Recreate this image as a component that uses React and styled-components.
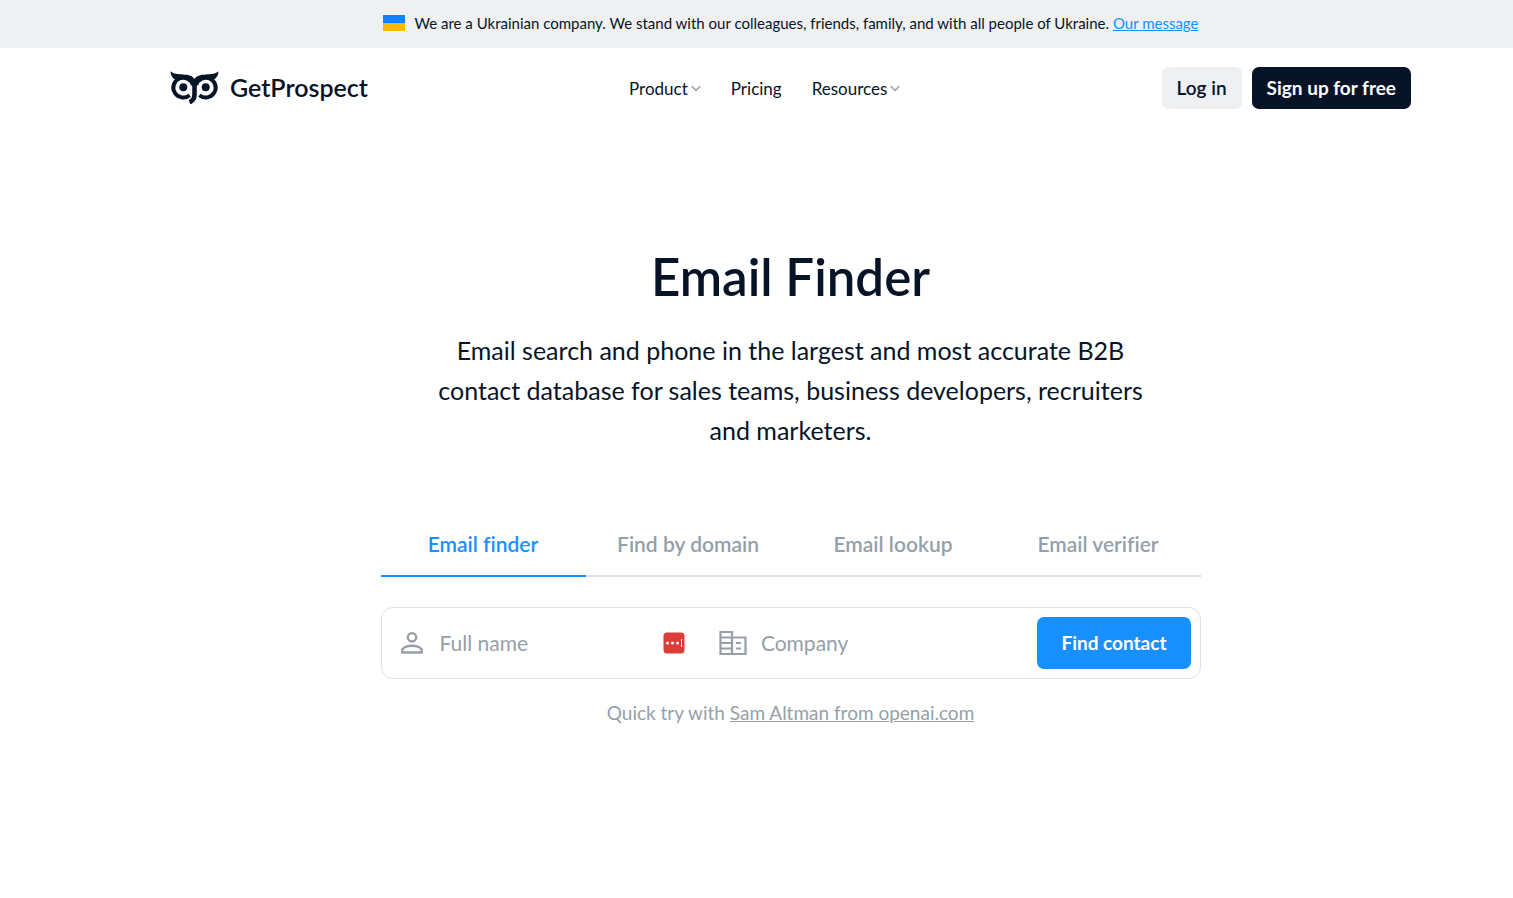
import React from 'react';
import styled, { createGlobalStyle } from 'styled-components';

const GlobalStyle = createGlobalStyle`
  *, *::before, *::after {
    box-sizing: border-box;
  }

  body {
    margin: 0;
    background: #ffffff;
    color: #071427;
    font-family: Lato, 'Liberation Sans', sans-serif;
    font-variant-ligatures: none;
  }

  button, input {
    font-family: inherit;
    font-variant-ligatures: inherit;
  }
`

const Banner = styled.div`
  display: flex;
  justify-content: center;
  align-items: center;
  gap: 10px;
  height: 48px;
  padding: 0 0 2px 68px;
  background: #eff0f2;
  font-size: 15px;
  line-height: 20px;

  p {
    margin: 0;
  }

  a {
    color: #1890ff;
  }
`

const Flag = styled.span`
  width: 22px;
  height: 16px;
  background: linear-gradient(#0a84ff 50%, #ffb800 50%);
`

const Page = styled.div`
  padding-left: 68px;
`

const Header = styled.header`
  display: flex;
  justify-content: space-between;
  align-items: center;
  max-width: 1241px;
  height: 80px;
  margin: 0 auto;
`

const Logo = styled.a`
  display: flex;
  align-items: center;
  gap: 11px;
  padding-bottom: 2px;
  color: #071427;
  font-size: 25px;
  font-weight: 600;
  line-height: 32px;
  text-decoration: none;
`

const Nav = styled.nav`
  display: flex;
  gap: 30px;
  padding-top: 2px;
`

const NavLink = styled.a`
  display: flex;
  align-items: center;
  gap: 3px;
  color: #071427;
  font-size: 17px;
  line-height: 24px;
  text-decoration: none;
`

const Actions = styled.div`
  display: flex;
  gap: 10px;
`

const Button = styled.button`
  height: ${props => props.$large ? '52px' : '42px'};
  padding: 0 ${props => props.$large ? '24px' : '15px'} 2px;
  border: 0;
  border-radius: 7px;
  background: ${props => props.$bg || '#071427'};
  color: ${props => props.$color || '#ffffff'};
  font-size: 19px;
  font-weight: ${props => props.$weight || 700};
  white-space: nowrap;
  cursor: pointer;
`

const Main = styled.main`
  display: flex;
  flex-direction: column;
  align-items: center;
  max-width: 820px;
  margin: 0 auto;
  padding-top: 117px;
`

const Title = styled.h1`
  margin: 0;
  font-size: 51px;
  font-weight: 600;
  line-height: 64px;
`

const Lead = styled.p`
  max-width: 740px;
  margin: 21px 0 0;
  font-size: 25px;
  line-height: 40px;
  text-align: center;
`

const Tabs = styled.div`
  display: grid;
  grid-template-columns: repeat(4, 1fr);
  width: 100%;
  margin-top: 62px;
`

const Tab = styled.button`
  height: 65px;
  padding: 0;
  border: 0;
  border-bottom: 2px solid ${props => props.$active ? '#1890ff' : '#dddfe1'};
  background: none;
  color: ${props => props.$active ? '#1890ff' : '#969fa8'};
  font-size: 21px;
  font-weight: 600;
  cursor: pointer;
`

const SearchForm = styled.form`
  display: flex;
  align-items: center;
  width: 100%;
  height: 72px;
  margin-top: 30px;
  padding: 0 9px 0 16px;
  border: 1px solid #dddfe1;
  border-radius: 12px;
`

const Field = styled.label`
  display: flex;
  flex: ${props => props.$grow || 1};
  align-items: center;
  gap: 14px;
  min-width: 0;
  padding-right: 34px;
  color: #969fa8;
`

const Input = styled.input`
  flex: 1;
  min-width: 0;
  padding: 0;
  border: 0;
  outline: 0;
  background: none;
  color: #071427;
  font-size: 21px;
  line-height: 28px;

  &::placeholder {
    color: #969fa8;
    opacity: 1;
  }
`

const QuickTry = styled.p`
  margin: 22px 0 0;
  color: #969fa8;
  font-size: 19px;
  line-height: 24px;

  a {
    color: inherit;
  }
`

function Owl() {
  return (
    <svg width="49" height="33" viewBox="0 0 49 33" fill="none" stroke="#071427" aria-hidden="true">
      <path d="M.5.3C3.500 3 8 3.300 13 3.500c6 .2 9.500 1.500 11.500 4.500 2-3 5.500-4.300 11.500-4.500 5-.2 9.500-.5 12.500-3.200 0 3.700-1.500 6-3.700 7.700L36 7.500c-5 .5-9 3-9.200 7.500h-4.600C22 10.500 18 8 13 7.500L4.200 8C2 6.300.5 4 .5.3Z" fill="#071427" stroke="none" />
      <path d="M22.800 14a9.900 9.900 0 1 0-3.200 10.200" strokeWidth="4" />
      <path d="M26.200 14a9.900 9.900 0 1 1 3.200 10.200" strokeWidth="4" />
      <path d="M24.500 13v10.500c0 4-1.800 6.500-5 7.700" strokeWidth="4.600" />
      <circle cx="13.300" cy="16.300" r="4" fill="#071427" stroke="none" />
      <circle cx="35.700" cy="16.300" r="4" fill="#071427" stroke="none" />
    </svg>
  );
}

function Chevron() {
  return (
    <svg width="10" height="8" viewBox="0 0 10 8" fill="none" stroke="#a7afb7" strokeWidth="1.800" aria-hidden="true">
      <path d="M.7 1.200 5 5.500l4.300-4.300" />
    </svg>
  );
}

function PersonIcon() {
  return (
    <svg width="28" height="28" viewBox="0 0 28 28" fill="none" stroke="currentColor" strokeWidth="2.400" aria-hidden="true">
      <circle cx="14" cy="8.300" r="4.200" />
      <path d="M4.300 23.500v-2.300c0-2.700 5.200-4.400 9.700-4.400s9.700 1.700 9.700 4.400v2.300Z" />
    </svg>
  );
}

function CompanyIcon() {
  return (
    <svg width="28" height="26" viewBox="0 0 28 26" fill="none" stroke="currentColor" strokeWidth="2.200" aria-hidden="true">
      <path d="M1.500 2h11.500v22H1.500ZM1.500 7.500H13M1.500 13H13M1.500 18.500H13M13 7.500h13.500v16.500H13M17 13h5M17 18.500h5" />
    </svg>
  );
}

function PasswordBadge() {
  return (
    <svg width="22" height="22" viewBox="0 0 22 22" aria-hidden="true">
      <rect x=".5" y=".5" width="21" height="21" rx="3.500" fill="#db3d38" />
      <g fill="#ffffff">
        <circle cx="4.500" cy="11" r="1.500" />
        <circle cx="9.500" cy="11" r="1.500" />
        <circle cx="14.500" cy="11" r="1.500" />
        <rect x="18" y="7" width="1" height="8" />
      </g>
    </svg>
  );
}

const tabs = ['Email finder', 'Find by domain', 'Email lookup', 'Email verifier'];

function App() {
  return (
    <>
      <GlobalStyle />
      <Banner>
        <Flag />
        <p>
          We are a Ukrainian company. We stand with our colleagues, friends, family, and with all people of Ukraine.{' '}
          <a href="#message">Our message</a>
        </p>
      </Banner>
      <Page>
        <Header>
          <Logo href="#home"><Owl />GetProspect</Logo>
          <Nav>
            <NavLink href="#product">Product<Chevron /></NavLink>
            <NavLink href="#pricing">Pricing</NavLink>
            <NavLink href="#resources">Resources<Chevron /></NavLink>
          </Nav>
          <Actions>
            <Button $bg="#eff0f2" $color="#071427" $weight={600}>Log in</Button>
            <Button>Sign up for free</Button>
          </Actions>
        </Header>
        <Main>
          <Title>Email Finder</Title>
          <Lead>
            Email search and phone in the largest and most accurate B2B contact database for sales teams, business developers, recruiters and marketers.
          </Lead>
          <Tabs role="tablist">
            {tabs.map((tab, i) => (
              <Tab key={tab} type="button" role="tab" aria-selected={i === 0} $active={i === 0}>{tab}</Tab>
            ))}
          </Tabs>
          <SearchForm onSubmit={e => e.preventDefault()}>
            <Field $grow={1.01}>
              <PersonIcon />
              <Input type="text" name="name" placeholder="Full name" aria-label="Full name" />
              <PasswordBadge />
            </Field>
            <Field>
              <CompanyIcon />
              <Input type="text" name="company" placeholder="Company" aria-label="Company" />
            </Field>
            <Button type="submit" $large $bg="#1890ff">Find contact</Button>
          </SearchForm>
          <QuickTry>
            Quick try with <a href="#try">Sam Altman from openai.com</a>
          </QuickTry>
        </Main>
      </Page>
    </>
  );
}

export default App;
